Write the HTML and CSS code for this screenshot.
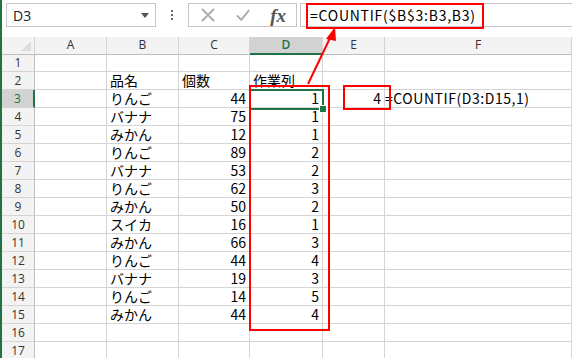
FILE: index.html
```html
<!DOCTYPE html>
<html lang="ja">
  <head>
    <meta charset="UTF-8" />
    <title>COUNTIF</title>
    <link rel="stylesheet" href="styles.css">
  </head>
  <body>
    <div class="app">
      <div class="formula-bar">
        <div class="name-box">
          <span>D3</span>
          <svg class="drop" viewBox="0 0 8 5"><path d="M0 0h8L4 5z" /></svg>
        </div>
        <div class="dots"><i></i><i></i><i></i></div>
        <div class="fx-buttons">
          <svg class="ico" viewBox="0 0 16 16"><path d="M1 1L15 15M15 1L1 15" /></svg>
          <svg class="ico" viewBox="0 0 16 16"><path d="M1 8.5L6 13.5L15 2.5" /></svg>
          <span class="fx">fx</span>
        </div>
        <div class="formula-input">=COUNTIF($B$3:B3,B3)</div>
      </div>

      <div class="sheet">
        <div class="row head">
          <div class="corner"></div><div>A</div><div>B</div><div>C</div><div class="sel">D</div><div>E</div><div>F</div>
        </div>
        <div class="row"><div class="rh">1</div><div></div><div></div><div></div><div></div><div></div><div></div></div>
        <div class="row"><div class="rh">2</div><div></div><div>品名</div><div>個数</div><div>作業列</div><div></div><div></div></div>
        <div class="row"><div class="rh sel">3</div><div></div><div>りんご</div><div class="num">44</div><div class="num">1</div><div class="num">4</div><div class="over">=COUNTIF(D3:D15,1)</div></div>
        <div class="row"><div class="rh">4</div><div></div><div>バナナ</div><div class="num">75</div><div class="num">1</div><div></div><div></div></div>
        <div class="row"><div class="rh">5</div><div></div><div>みかん</div><div class="num">12</div><div class="num">1</div><div></div><div></div></div>
        <div class="row"><div class="rh">6</div><div></div><div>りんご</div><div class="num">89</div><div class="num">2</div><div></div><div></div></div>
        <div class="row"><div class="rh">7</div><div></div><div>バナナ</div><div class="num">53</div><div class="num">2</div><div></div><div></div></div>
        <div class="row"><div class="rh">8</div><div></div><div>りんご</div><div class="num">62</div><div class="num">3</div><div></div><div></div></div>
        <div class="row"><div class="rh">9</div><div></div><div>みかん</div><div class="num">50</div><div class="num">2</div><div></div><div></div></div>
        <div class="row"><div class="rh">10</div><div></div><div>スイカ</div><div class="num">16</div><div class="num">1</div><div></div><div></div></div>
        <div class="row"><div class="rh">11</div><div></div><div>みかん</div><div class="num">66</div><div class="num">3</div><div></div><div></div></div>
        <div class="row"><div class="rh">12</div><div></div><div>りんご</div><div class="num">44</div><div class="num">4</div><div></div><div></div></div>
        <div class="row"><div class="rh">13</div><div></div><div>バナナ</div><div class="num">19</div><div class="num">3</div><div></div><div></div></div>
        <div class="row"><div class="rh">14</div><div></div><div>りんご</div><div class="num">14</div><div class="num">5</div><div></div><div></div></div>
        <div class="row"><div class="rh">15</div><div></div><div>みかん</div><div class="num">44</div><div class="num">4</div><div></div><div></div></div>
        <div class="row"><div class="rh">16</div><div></div><div></div><div></div><div></div><div></div><div></div></div>
        <div class="row"><div class="rh">17</div><div></div><div></div><div></div><div></div><div></div><div></div></div>
      </div>

      <!-- selection + annotations -->
      <div class="cursor"><i></i></div>
      <div class="mark mark-formula"></div>
      <div class="mark mark-col"></div>
      <div class="mark mark-e3"></div>
      <svg class="arrow" viewBox="0 0 572 358">
        <line x1="308" y1="84" x2="331" y2="36" />
        <polygon points="335,27 326,39 336,41" />
      </svg>
    </div>
  </body>
</html>
```

FILE: styles.css
```css
:root {
  --grid: #d4d4d4;
  --head: #f3f3f3;
  --head-sel: #d2d2d2;
  --green: #217346;
  --red: #ff0000;
}

body {
  margin: 0;
  background: #fff;
  font-family: "Noto Sans CJK JP", sans-serif;
  color: #000;
}

.app {
  position: relative;
  width: 572px;
  height: 358px;
  overflow: hidden;
  border-left: 2px solid var(--green);
  box-sizing: border-box;
}

/* formula bar */
.formula-bar {
  display: flex;
  align-items: stretch;
  height: 24px;
  padding: 3px 0 10px 4px;
}

.name-box {
  width: 150px;
  box-sizing: border-box;
  border: 1px solid #c6c6c6;
  display: flex;
  align-items: center;
  justify-content: space-between;
  padding: 0 6px 0 6px;
  font-family: "Open Sans", sans-serif;
  font-size: 14px;
  color: #222;
}

.drop {
  width: 8px;
  height: 5px;
  fill: #555;
}

.dots {
  width: 32px;
  display: flex;
  flex-direction: column;
  align-items: center;
  justify-content: center;
  gap: 2px;
}

.dots i {
  width: 2px;
  height: 2px;
  background: #666;
}

.fx-buttons {
  width: 109px;
  box-sizing: border-box;
  border: 1px solid #c6c6c6;
  display: flex;
  align-items: center;
  justify-content: space-between;
  padding: 0 10px 0 12px;
}

.ico {
  width: 14px;
  height: 14px;
  fill: none;
  stroke: #a9a9a9;
  stroke-width: 2.2;
}

.fx {
  font-family: "Liberation Serif", serif;
  font-style: italic;
  font-weight: bold;
  font-size: 19px;
  color: #555;
  line-height: 1;
}

.formula-input {
  flex: 1;
  margin-left: 3px;
  border: 1px solid #c6c6c6;
  border-right: none;
  padding-left: 9px;
  font-size: 14px;
  line-height: 22px;
  letter-spacing: 0.75px;
  white-space: nowrap;
}

/* sheet */
.row {
  display: grid;
  grid-template-columns: 33px 72px 72px 71px 73px 62px 1fr;
  height: 18px;
}

.row > div {
  box-sizing: border-box;
  border-right: 1px solid var(--grid);
  border-bottom: 1px solid var(--grid);
  font-size: 14px;
  line-height: 17px;
  padding: 0 3px;
  white-space: nowrap;
}

.row.head {
  height: 17px;
}

.row.head > div {
  background: var(--head);
  text-align: center;
  font-family: "Open Sans", sans-serif;
  font-size: 12px;
  line-height: 16px;
  color: #333;
  border-bottom-color: #bdbdbd;
}

.row.head > div.sel {
  background: var(--head-sel);
  color: var(--green);
  border-bottom: 2px solid var(--green);
  font-weight: 600;
}

.corner {
  position: relative;
}

.corner::after {
  content: "";
  position: absolute;
  right: 3px;
  bottom: 3px;
  border-left: 10px solid transparent;
  border-bottom: 10px solid #dcdcdc;
}

.row > .rh {
  background: var(--head);
  text-align: center;
  font-family: "Open Sans", sans-serif;
  font-size: 12px;
  color: #333;
  padding: 0;
  border-right-color: #bdbdbd;
}

.row > .rh.sel {
  background: var(--head-sel);
  color: var(--green);
  border-right: 2px solid var(--green);
}

.row > .num {
  text-align: right;
  padding-right: 3px;
}

.row > .over {
  overflow: visible;
  padding-left: 0;
  letter-spacing: 0.55px;
}

/* selection and red marks */
.cursor {
  position: absolute;
  left: 247px;
  top: 89px;
  width: 75px;
  height: 21px;
  border: 2px solid var(--green);
  box-sizing: border-box;
}

.cursor i {
  position: absolute;
  right: -5px;
  bottom: -5px;
  width: 6px;
  height: 6px;
  background: var(--green);
  border: 1px solid #fff;
}

.mark {
  position: absolute;
  border: 2px solid var(--red);
  box-sizing: border-box;
}

.mark-formula {
  left: 304px;
  top: 3px;
  width: 178px;
  height: 26px;
}

.mark-col {
  left: 247px;
  top: 85px;
  width: 81px;
  height: 246px;
}

.mark-e3 {
  left: 341px;
  top: 85px;
  width: 48px;
  height: 25px;
}

.arrow {
  position: absolute;
  left: -2px;
  top: 0;
  width: 572px;
  height: 358px;
}

.arrow line {
  stroke: var(--red);
  stroke-width: 2;
}

.arrow polygon {
  fill: var(--red);
}
```
